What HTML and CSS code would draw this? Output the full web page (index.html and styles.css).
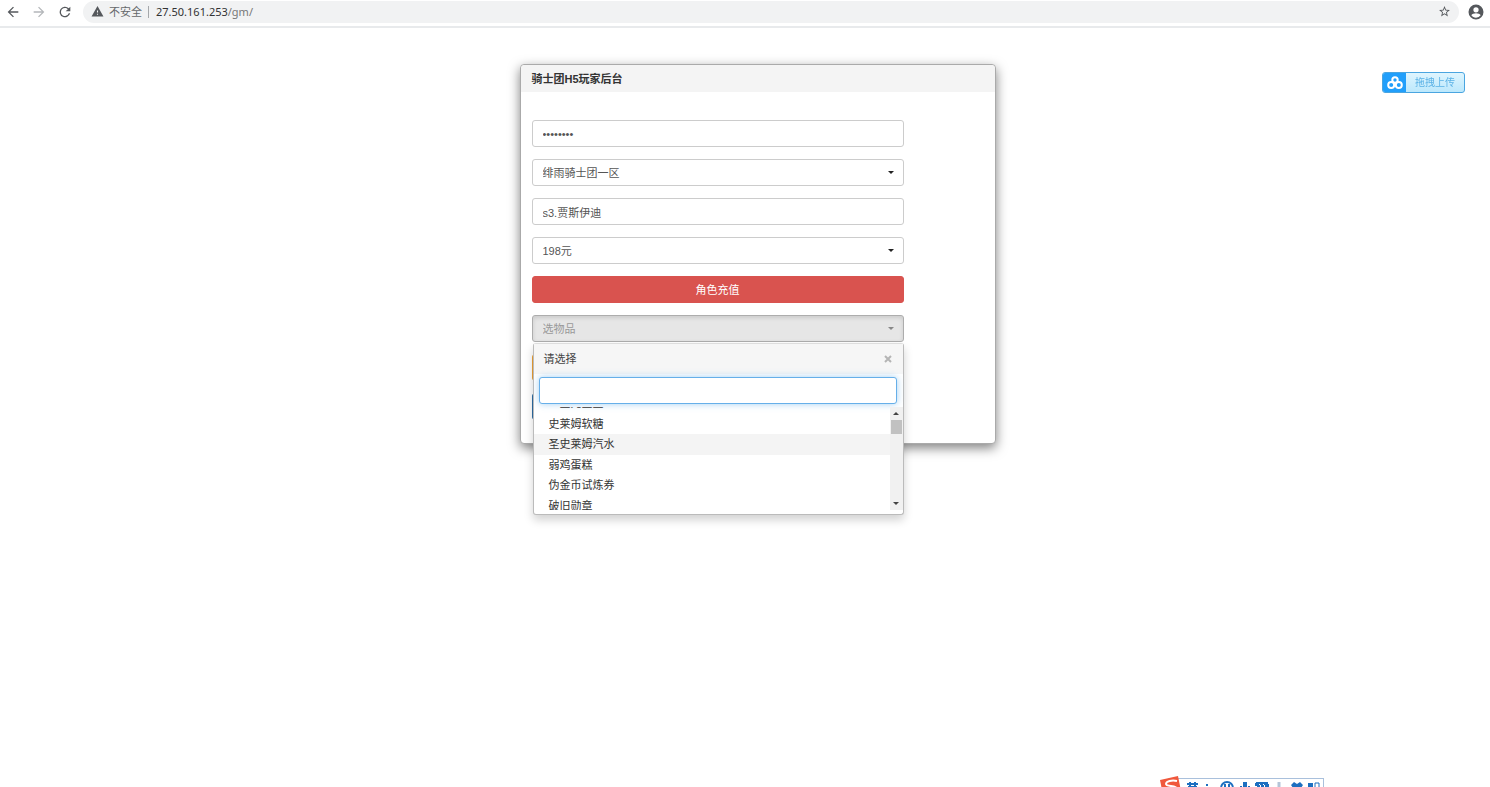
FILE: index.html
```html
<!DOCTYPE html>
<html lang="zh-CN">
<head>
    <meta charset="UTF-8">
    <meta name="viewport" content="width=device-width, initial-scale=1.0">
    <title>骑士团H5玩家后台</title>
    <link rel="stylesheet" href="styles.css">
</head>
<body>

<header class="browser-bar">
    <button class="nav-btn" aria-label="后退">
        <svg viewBox="0 0 24 24"><path d="M20 11H7.8l5.6-5.6L12 4l-8 8 8 8 1.4-1.4L7.8 13H20z"/></svg>
    </button>
    <button class="nav-btn muted" aria-label="前进">
        <svg viewBox="0 0 24 24"><path d="M4 11h12.2l-5.6-5.6L12 4l8 8-8 8-1.4-1.4 5.6-5.6H4z"/></svg>
    </button>
    <button class="nav-btn" aria-label="重新加载">
        <svg viewBox="0 0 24 24"><path d="M17.65 6.35A8 8 0 1 0 19.73 14h-2.08A6 6 0 1 1 12 6c1.66 0 3.14.69 4.22 1.78L13 11h7V4z"/></svg>
    </button>
    <div class="address">
        <svg class="warn" viewBox="0 0 24 24"><path d="M1 21h22L12 2zm12-3h-2v-2h2zm0-4h-2v-4h2z"/></svg>
        <span class="insecure">不安全</span>
        <span class="url">27.50.161.253<span class="path">/gm/</span></span>
        <button class="star" aria-label="收藏">
            <svg viewBox="0 0 24 24"><path d="M22 9.24l-7.19-.62L12 2 9.19 8.63 2 9.24l5.46 4.73L5.82 21 12 17.27 18.18 21l-1.63-7.03zM12 15.4l-3.76 2.27 1-4.28-3.32-2.88 4.38-.38L12 6.1l1.71 4.04 4.38.38-3.32 2.88 1 4.28z"/></svg>
        </button>
    </div>
    <button class="avatar" aria-label="用户">
        <svg viewBox="0 0 24 24"><path d="M12 2a10 10 0 1 0 0 20 10 10 0 0 0 0-20zm0 3.5a3.5 3.5 0 1 1 0 7 3.5 3.5 0 0 1 0-7zM12 19.500c-2.600 0-4.900-1.300-6.200-3.300.1-1.800 4.100-2.700 6.200-2.700s6.100.9 6.200 2.700A7.400 7.400 0 0 1 12 19.500z"/></svg>
    </button>
</header>

<button class="upload">
    <span class="upload-icon">
        <svg viewBox="0 0 16 14"><g fill="none" stroke="#fff" stroke-width="2"><circle cx="8" cy="4" r="2.700"/><circle cx="4.200" cy="9" r="3"/><circle cx="11.800" cy="9" r="3"/></g></svg>
    </span>
    <span class="upload-text">拖拽上传</span>
</button>

<main>
    <section class="panel">
        <h1>骑士团H5玩家后台</h1>
        <form class="form">
            <input class="field" type="password" value="12345678" aria-label="密码">
            <div class="select">
                <select class="field" aria-label="选区">
                    <option>绯雨骑士团一区</option>
                </select>
            </div>
            <input class="field" type="text" value="s3.贾斯伊迪" aria-label="角色名">
            <div class="select">
                <select class="field" aria-label="充值金额">
                    <option>198元</option>
                </select>
            </div>
            <button type="button" class="btn danger">角色充值</button>
            <div class="select open">
                <select class="field" aria-label="选物品">
                    <option>选物品</option>
                </select>
                <div class="menu">
                    <div class="menu-title">
                        <span>请选择</span>
                        <button type="button" class="close" aria-label="关闭">
                            <svg viewBox="0 0 8 8"><path d="M1 1l6 6M7 1l-6 6" stroke="#b5b5b5" stroke-width="2"/></svg>
                        </button>
                    </div>
                    <div class="search">
                        <input class="field" type="text" aria-label="搜索物品">
                    </div>
                    <div class="list">
                        <ul>
                            <li>一星元宝盒</li>
                            <li>史莱姆软糖</li>
                            <li class="active">圣史莱姆汽水</li>
                            <li>弱鸡蛋糕</li>
                            <li>伪金币试炼券</li>
                            <li>破旧勋章</li>
                        </ul>
                        <div class="scrollbar">
                            <i class="up"></i>
                            <i class="thumb"></i>
                            <i class="down"></i>
                        </div>
                    </div>
                </div>
            </div>
            <button type="button" class="btn warning" aria-label="发送物品"></button>
            <button type="button" class="btn primary" aria-label="提交"></button>
        </form>
    </section>
</main>

<!-- input method toolbar, hangs off the bottom of the screen -->
<div class="ime">
    <svg viewBox="0 0 166 26">
        <rect x="10" y="2.500" width="154.500" height="22" fill="#fff" stroke="#a9c0dc"/>
        <path d="M1 4l18-4 4 20-18 4z" fill="#f0583c"/>
        <path d="M18 5c-5-1-11 0-11 3s11 1 11 5-6 5-11 4" fill="none" stroke="#fff" stroke-width="2"/>
        <g fill="none" stroke="#1d6fc0" stroke-width="2">
            <path d="M28 8h11M31 6v4M36 6v4M30 11h7v4h-7z"/>
            <path d="M48 8v2"/>
            <circle cx="68" cy="12" r="6"/><path d="M66 8v3M70 8v3"/>
            <path d="M86 6v8" stroke-width="4"/><path d="M82 10v2M90 10v2"/>
            <path d="M97 8h12v7H97zM98 10h10" stroke-dasharray="3 1"/>
            <path d="M97 7h12"/>
            <path d="M120 6v6" stroke="#b5c5d8" stroke-width="3"/>
        </g>
        <path d="M132 9l3-3 3 2 3-2 3 3-2 3v6h-8v-6zM149 7h5v4h-5zM149 12h5v4h-5z" fill="#1d6fc0"/>
        <path d="M156 7h4v7h-4z" fill="none" stroke="#1d6fc0"/>
    </svg>
</div>

</body>
</html>
```
FILE: styles.css
```css
* {
    box-sizing: border-box;
}
body {
    margin: 0;
    min-height: 100vh;
    background: #fff;
    color: #444;
    font-family: "Liberation Sans", "Noto Sans CJK SC", sans-serif;
    font-size: 11px;
    line-height: 16px;
}
button {
    border: 0;
    padding: 0;
    background: none;
    font: inherit;
    cursor: pointer;
}
svg {
    display: block;
}

/* browser bar */
.browser-bar {
    display: flex;
    align-items: center;
    height: 28px;
    padding: 0 5px 3px;
    border-bottom: 2px solid #e8eaec;
    font-family: "Noto Sans", "Noto Sans CJK SC", sans-serif;
}
.nav-btn {
    margin-right: 10px;
}
.nav-btn svg, .avatar svg {
    width: 16px;
    fill: #55585c;
}
.muted svg {
    fill: #b4b7ba;
}
.address {
    flex: 1;
    display: flex;
    align-items: center;
    height: 22px;
    padding: 0 8px;
    border-radius: 11px;
    background: #f1f2f3;
}
.warn {
    width: 13px;
    margin-right: 5px;
    fill: #55585c;
}
.insecure {
    padding-right: 6px;
    border-right: 1px solid #a5a8ab;
    color: #66696c;
    line-height: 12px;
}
.url {
    margin-left: 7px;
    color: #333;
}
.path {
    color: #777;
}
.star {
    margin-left: auto;
}
.star svg {
    width: 13px;
    fill: #55585c;
}
.avatar {
    margin-left: 8px;
}
.avatar svg {
    width: 18px;
}

/* upload button */
.upload {
    position: fixed;
    top: 72px;
    right: 25px;
    display: flex;
    width: 83px;
    height: 21px;
    border: 1px solid #4aa5e0;
    border-radius: 3px;
    overflow: hidden;
    background: linear-gradient(#dff5fe, #bce8fc);
    color: #5bb2e6;
    font-size: 10px;
}
.upload-icon {
    display: flex;
    align-items: center;
    justify-content: center;
    width: 23px;
    height: 100%;
    background: #219ffb;
}
.upload-icon svg {
    width: 16px;
}
.upload-text {
    flex: 1;
    line-height: 19px;
}

/* panel */
main {
    padding: 36px 0 0 25px;
}
.panel {
    width: 476px;
    max-width: 100%;
    margin: 0 auto;
    border: 1px solid #aaa;
    border-radius: 4px;
    background: #fff;
    box-shadow: 0 4px 12px rgba(0, 0, 0, 0.5);
}
h1 {
    margin: 0;
    padding: 6px 11px 5px;
    border-radius: 4px 4px 0 0;
    background: #f4f4f4;
    color: #333;
    font-size: 11px;
    font-weight: bold;
}
.form {
    display: flex;
    flex-direction: column;
    gap: 12px;
    width: 394px;
    max-width: 100%;
    padding: 28px 11px 23px;
}
.field {
    display: block;
    width: 100%;
    height: 27px;
    padding: 0 10px;
    border: 1px solid #ccc;
    border-radius: 3px;
    background: #fff;
    color: #555;
    font: inherit;
    outline: 0;
    appearance: none;
}
.select {
    position: relative;
}
.select::after {
    content: "";
    position: absolute;
    top: 12px;
    right: 10px;
    border: 3px solid transparent;
    border-top-color: #222;
    border-bottom: 0;
}
.btn {
    height: 27px;
    border: 1px solid #d9534f;
    border-radius: 3px;
    background: #d9534f;
    color: #fff;
}
.warning {
    border-color: #eea236;
    background: #f0ad4e;
}
.primary {
    border-color: #2e6da4;
    background: #337ab7;
}
.open > .field {
    border-color: #adadad;
    background: #e6e6e6;
    color: #999;
    box-shadow: inset 0 2px 4px rgba(0, 0, 0, 0.12);
}
.open::after {
    border-top-color: #888;
}

/* dropdown menu */
.menu {
    position: absolute;
    top: 28px;
    left: 1px;
    right: 0;
    z-index: 1;
    padding-bottom: 4px;
    border: 1px solid #bbb;
    border-top-color: #ddd;
    border-radius: 3px;
    background: #fff;
    box-shadow: 0 5px 10px rgba(0, 0, 0, 0.18);
}
.menu-title {
    display: flex;
    align-items: center;
    justify-content: space-between;
    height: 30px;
    padding: 0 11px 0 10px;
    background: #f6f6f6;
}
.close svg {
    width: 8px;
}
.search {
    padding: 3px 6px 3px 5px;
}
.search .field {
    border-color: #66afe9;
    box-shadow: 0 0 7px rgba(102, 175, 233, 0.6);
}
.list {
    display: flex;
    height: 103px;
    overflow: hidden;
}
/* scrolled down by part of a row */
ul {
    flex: 1;
    display: grid;
    grid-auto-rows: 1fr;
    height: 123px;
    margin: -14px 0 0;
    padding: 0;
    list-style: none;
}
li {
    display: flex;
    align-items: center;
    padding-left: 15px;
    color: #333;
}
.active {
    background: #f4f4f4;
}
.scrollbar {
    display: flex;
    flex-direction: column;
    align-items: center;
    width: 13px;
    padding: 5px 0;
    background: #f1f1f1;
}
.up, .down {
    border: 3px solid transparent;
}
.up {
    border-bottom-color: #444;
    border-top: 0;
}
.thumb {
    width: 11px;
    height: 14px;
    margin-top: 5px;
    background: #c1c1c1;
}
.down {
    margin-top: auto;
    border-top-color: #444;
    border-bottom: 0;
}

.ime {
    position: fixed;
    right: 165px;
    bottom: -15px;
    width: 166px;
}
```
